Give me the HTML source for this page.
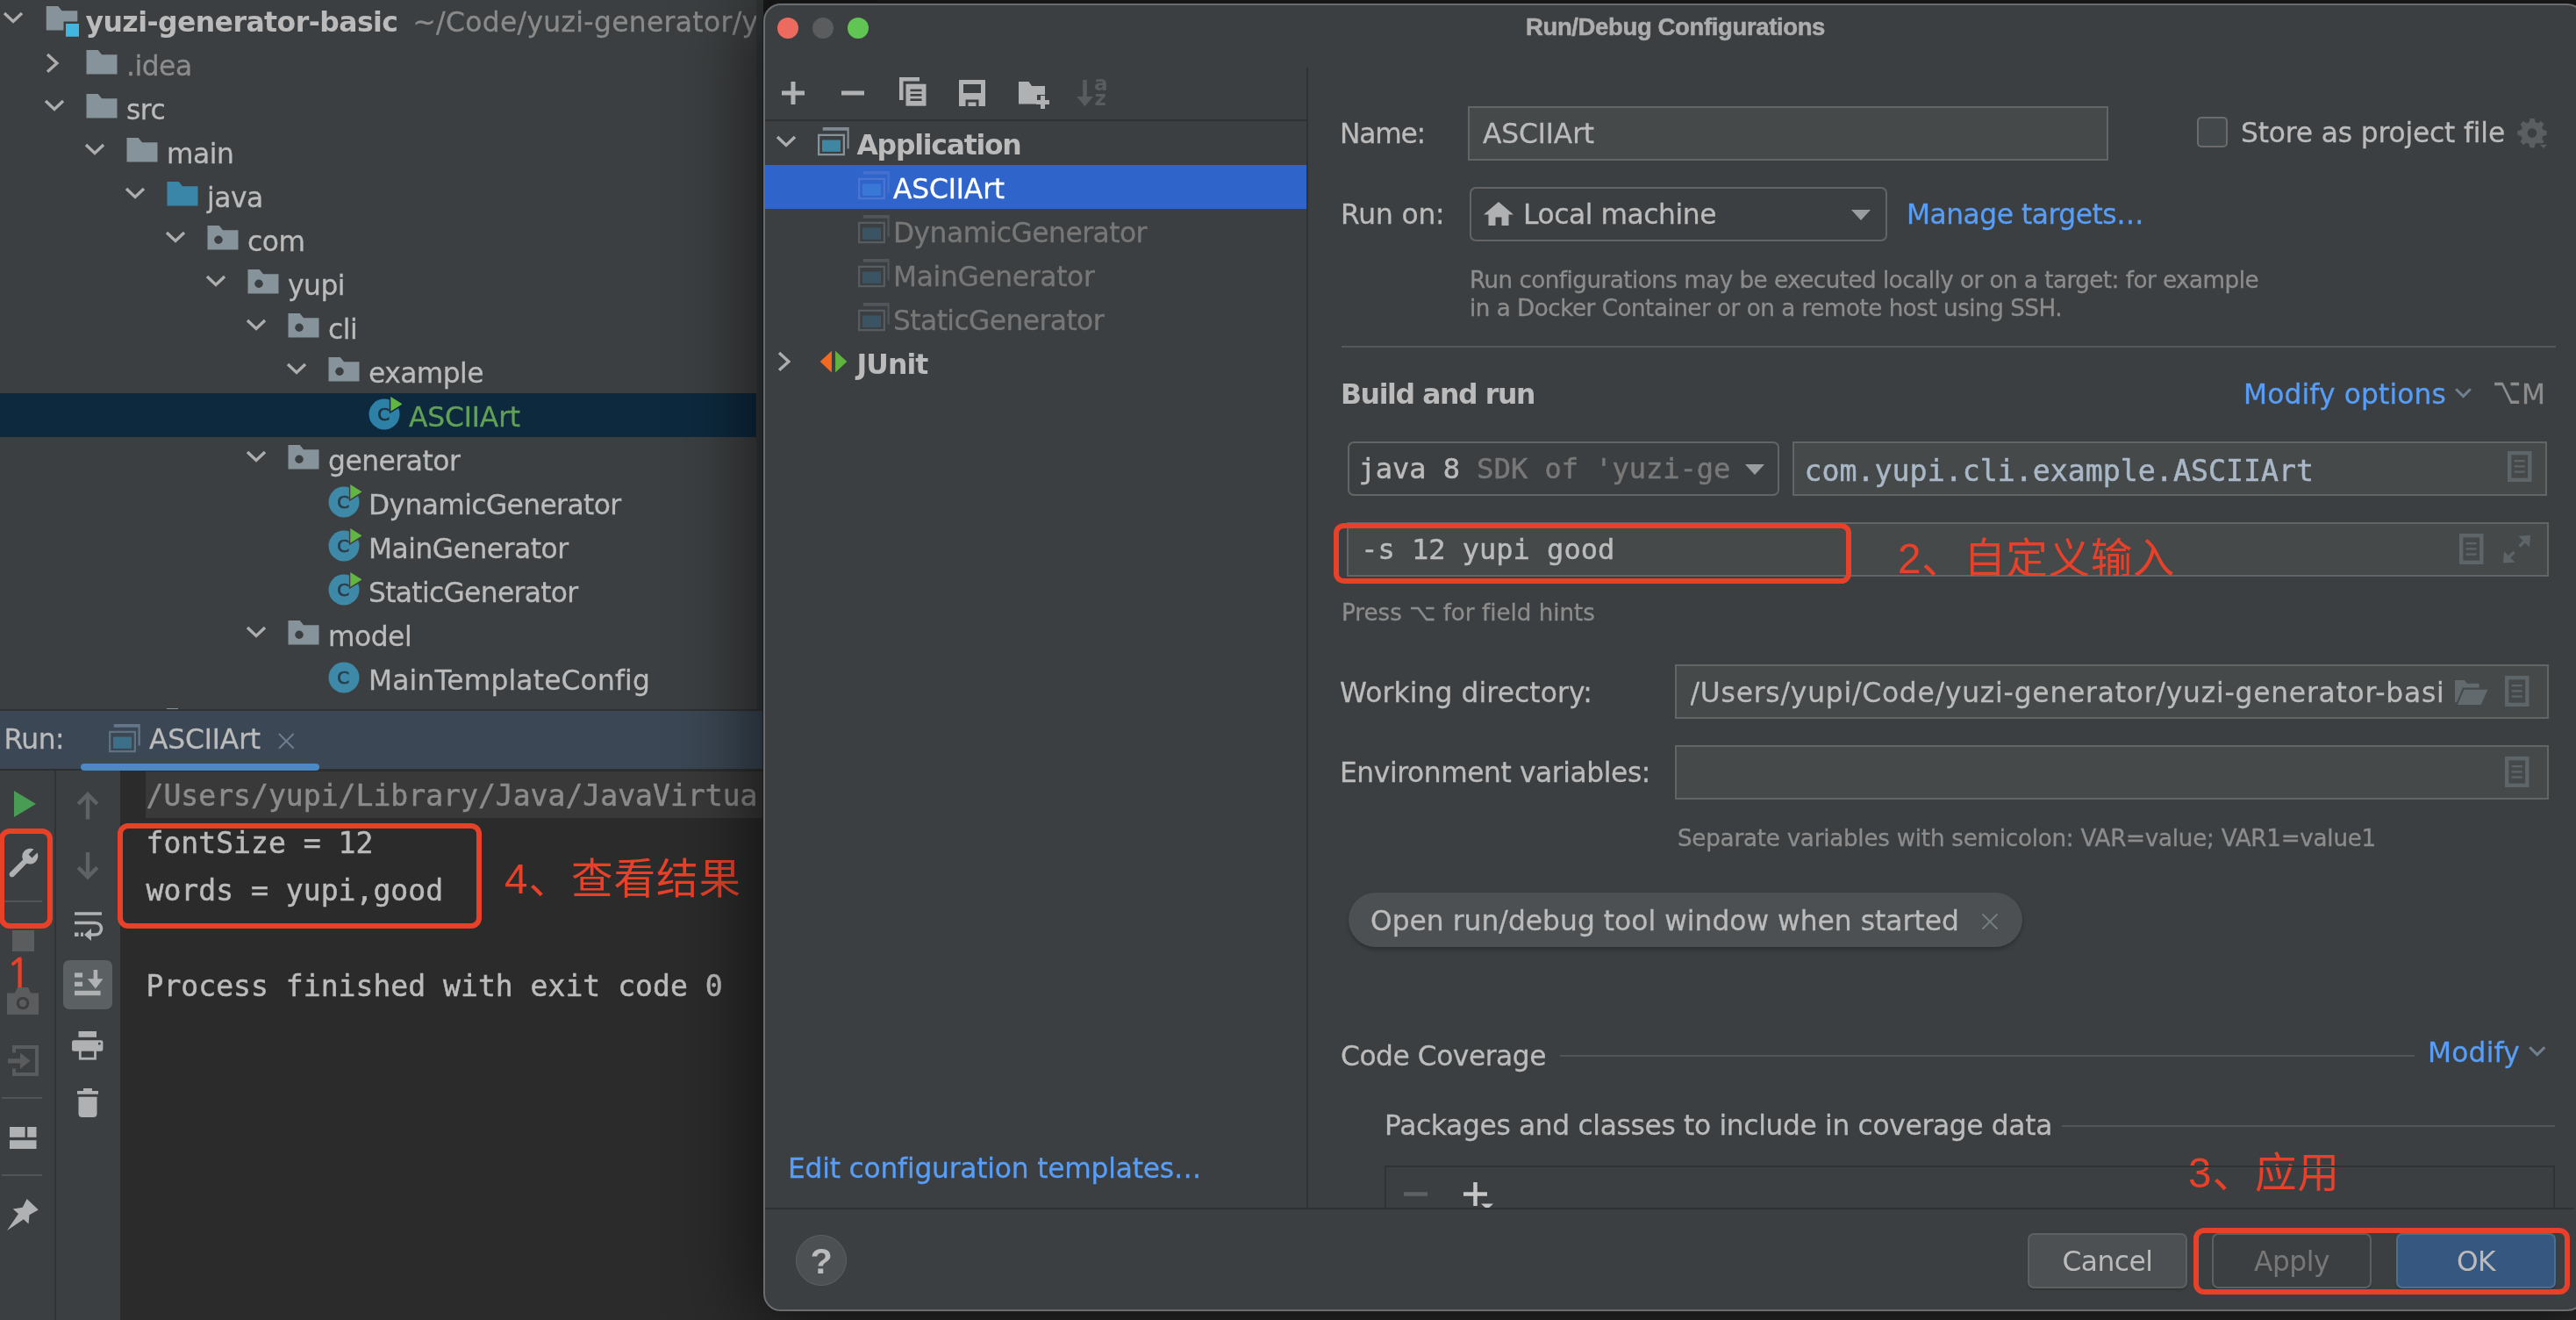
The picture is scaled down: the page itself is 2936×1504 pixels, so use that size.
<!DOCTYPE html>
<html lang="zh"><head><meta charset="utf-8"><title>Run/Debug Configurations</title><style>
html,body{margin:0;padding:0;background:#1b1b1b;}
body{width:2936px;height:1504px;position:relative;overflow:hidden;font-family:'DejaVu Sans', 'Liberation Sans', 'Noto Sans CJK SC', sans-serif;will-change:transform;}
.a{position:absolute;box-sizing:border-box;}
.t{position:absolute;white-space:pre;}
svg{overflow:visible;}
</style></head>
<body>
<svg width="0" height="0" style="position:absolute">
<defs>
<symbol id="folder" viewBox="0 0 16 16"><path fill="#87939a" d="M1,1.6 H6.3 L8,3.7 H15 V12.6 H1 Z"/></symbol>
<symbol id="folderSrc" viewBox="0 0 16 16"><path fill="#3a86a8" d="M1,1.6 H6.3 L8,3.7 H15 V12.6 H1 Z"/></symbol>
<symbol id="folderPkg" viewBox="0 0 16 16"><path fill="#87939a" d="M1,1.6 H6.3 L8,3.7 H15 V12.6 H1 Z"/><circle cx="6" cy="8.1" r="1.9" fill="#3c3f41"/></symbol>
<symbol id="folderMod" viewBox="0 0 16 16"><path fill="#87939a" d="M1.1,1.6 H6.5 L8.2,3.7 H15.3 V12.6 H1.1 Z"/><rect x="9" y="8.6" width="7.5" height="7.5" fill="#3c3f41"/><rect x="10" y="9.6" width="6" height="5.9" fill="#40b6e0"/></symbol>
<symbol id="cls" viewBox="0 0 16 16"><circle cx="8" cy="8" r="7" fill="#3e89a8"/><text x="7.7" y="10.85" font-size="8" font-family="DejaVu Sans, sans-serif" text-anchor="middle" fill="#2b3d49" stroke="#2b3d49" stroke-width="0.3">C</text></symbol>
<symbol id="clsRun" viewBox="0 0 16 16"><circle cx="8" cy="8" r="7" fill="#3e89a8"/><text x="7.7" y="10.85" font-size="8" font-family="DejaVu Sans, sans-serif" text-anchor="middle" fill="#2b3d49" stroke="#2b3d49" stroke-width="0.3">C</text><path d="M10.35,-1 L17.6,3.35 L10.35,7.7 Z" fill="#3c3f41"/><path d="M10.9,0 L16.2,3.35 L10.9,6.7 Z" fill="#62b543"/></symbol>
<symbol id="clsRunSel" viewBox="0 0 16 16"><circle cx="8" cy="8" r="7" fill="#2d80a6"/><text x="7.7" y="10.85" font-size="8" font-family="DejaVu Sans, sans-serif" text-anchor="middle" fill="#22323f" stroke="#22323f" stroke-width="0.3">C</text><path d="M10.35,-1 L17.6,3.35 L10.35,7.7 Z" fill="#0d293e"/><path d="M10.9,0 L16.2,3.35 L10.9,6.7 Z" fill="#62b543"/></symbol>
<symbol id="chevD" viewBox="0 0 16 16"><path d="M4,4.83 L8,8.6 L12,4.83" fill="none" stroke="#adadad" stroke-width="1.35"/></symbol>
<symbol id="chevR" viewBox="0 0 16 16"><path d="M5.62,3.64 L9.95,7.56 L5.62,11.48" fill="none" stroke="#adadad" stroke-width="1.35"/></symbol>
<symbol id="appcfg" viewBox="0 0 16 16"><path d="M3.1,1.6 H15.1 V11.4 H14.2 V3.1 H3.1 Z" fill="#7f8b93"/><rect x="1.25" y="5.15" width="11.5" height="8.9" fill="none" stroke="#87939a" stroke-width="0.9"/><rect x="2.8" y="7.4" width="8.4" height="5.35" fill="#3e87a3"/></symbol>
<symbol id="appcfgSel" viewBox="0 0 16 16"><path d="M3.1,1.6 H15.1 V11.4 H14.2 V3.1 H3.1 Z" fill="#4670cd"/><rect x="1.25" y="5.15" width="11.5" height="8.9" fill="none" stroke="#4a74d0" stroke-width="0.9"/><rect x="2.8" y="7.4" width="8.4" height="5.35" fill="#3a78d6"/></symbol>
<symbol id="appcfgDim" viewBox="0 0 16 16"><path d="M3.1,1.6 H15.1 V11.4 H14.2 V3.1 H3.1 Z" fill="#50565a"/><rect x="1.25" y="5.15" width="11.5" height="8.9" fill="none" stroke="#565d61" stroke-width="0.9"/><rect x="2.8" y="7.4" width="8.4" height="5.35" fill="#3b5463"/></symbol>
<symbol id="appcfgTab" viewBox="0 0 16 16"><path d="M3.1,1.6 H15.1 V11.4 H14.2 V3.1 H3.1 Z" fill="#65768a"/><rect x="1.25" y="5.15" width="11.5" height="8.9" fill="none" stroke="#5f7081" stroke-width="0.9"/><rect x="2.8" y="7.4" width="8.4" height="5.35" fill="#3c6f88"/></symbol>
<symbol id="junit" viewBox="0 0 16 16"><path d="M7.18,3.05 V12.95 L1.88,8 Z" fill="#f26a21"/><path d="M8.82,3.05 V12.95 L14.12,8 Z" fill="#60b33f"/></symbol>
</defs>
</svg>

<div class="a" style="left:0px;top:0px;width:862px;height:810px;background:#3c3f41;"></div>
<div class="a" style="left:0px;top:448px;width:862px;height:50px;background:#0d293e;"></div>
<svg class="a" style="left:49.5px;top:3px;" width="40" height="40" viewBox="0 0 16 16"><use href="#folderMod"/></svg>
<svg class="a" style="left:-5px;top:3px;" width="40" height="40" viewBox="0 0 16 16"><use href="#chevD"/></svg>
<div class="t" id="t0" style="left:97.5px;top:2.60px;height:44px;line-height:44px;font-size:31.5px;color:#bbbbbb;font-weight:bold;letter-spacing:-0.550px;">yuzi-generator-basic</div>
<div class="t" id="t1" style="left:470.5px;top:2.60px;height:44px;line-height:44px;font-size:31.3px;color:#8a8a8a;-webkit-text-stroke:0.3px;letter-spacing:0.355px;width:391.5px;overflow:hidden;">~/Code/yuzi-generator/yuzi</div>
<svg class="a" style="left:96px;top:53px;" width="40" height="40" viewBox="0 0 16 16"><use href="#folder"/></svg>
<svg class="a" style="left:40px;top:53px;" width="40" height="40" viewBox="0 0 16 16"><use href="#chevR"/></svg>
<div class="t" id="t2" style="left:144px;top:52.60px;height:44px;line-height:44px;font-size:31.3px;color:#8c8c8c;-webkit-text-stroke:0.3px;letter-spacing:-0.469px;">.idea</div>
<svg class="a" style="left:96px;top:103px;" width="40" height="40" viewBox="0 0 16 16"><use href="#folder"/></svg>
<svg class="a" style="left:42px;top:103px;" width="40" height="40" viewBox="0 0 16 16"><use href="#chevD"/></svg>
<div class="t" id="t3" style="left:144px;top:102.60px;height:44px;line-height:44px;font-size:31.3px;color:#bbbbbb;-webkit-text-stroke:0.3px;letter-spacing:-0.469px;">src</div>
<svg class="a" style="left:142px;top:153px;" width="40" height="40" viewBox="0 0 16 16"><use href="#folder"/></svg>
<svg class="a" style="left:88px;top:153px;" width="40" height="40" viewBox="0 0 16 16"><use href="#chevD"/></svg>
<div class="t" id="t4" style="left:190px;top:152.60px;height:44px;line-height:44px;font-size:31.3px;color:#bbbbbb;-webkit-text-stroke:0.3px;letter-spacing:-0.469px;">main</div>
<svg class="a" style="left:188px;top:203px;" width="40" height="40" viewBox="0 0 16 16"><use href="#folderSrc"/></svg>
<svg class="a" style="left:134px;top:203px;" width="40" height="40" viewBox="0 0 16 16"><use href="#chevD"/></svg>
<div class="t" id="t5" style="left:236px;top:202.60px;height:44px;line-height:44px;font-size:31.3px;color:#bbbbbb;-webkit-text-stroke:0.3px;letter-spacing:-0.469px;">java</div>
<svg class="a" style="left:234px;top:253px;" width="40" height="40" viewBox="0 0 16 16"><use href="#folderPkg"/></svg>
<svg class="a" style="left:180px;top:253px;" width="40" height="40" viewBox="0 0 16 16"><use href="#chevD"/></svg>
<div class="t" id="t6" style="left:282px;top:252.60px;height:44px;line-height:44px;font-size:31.3px;color:#bbbbbb;-webkit-text-stroke:0.3px;letter-spacing:-0.469px;">com</div>
<svg class="a" style="left:280px;top:303px;" width="40" height="40" viewBox="0 0 16 16"><use href="#folderPkg"/></svg>
<svg class="a" style="left:226px;top:303px;" width="40" height="40" viewBox="0 0 16 16"><use href="#chevD"/></svg>
<div class="t" id="t7" style="left:328px;top:302.60px;height:44px;line-height:44px;font-size:31.3px;color:#bbbbbb;-webkit-text-stroke:0.3px;letter-spacing:-0.469px;">yupi</div>
<svg class="a" style="left:326px;top:353px;" width="40" height="40" viewBox="0 0 16 16"><use href="#folderPkg"/></svg>
<svg class="a" style="left:272px;top:353px;" width="40" height="40" viewBox="0 0 16 16"><use href="#chevD"/></svg>
<div class="t" id="t8" style="left:374px;top:352.60px;height:44px;line-height:44px;font-size:31.3px;color:#bbbbbb;-webkit-text-stroke:0.3px;letter-spacing:-0.469px;">cli</div>
<svg class="a" style="left:372px;top:403px;" width="40" height="40" viewBox="0 0 16 16"><use href="#folderPkg"/></svg>
<svg class="a" style="left:318px;top:403px;" width="40" height="40" viewBox="0 0 16 16"><use href="#chevD"/></svg>
<div class="t" id="t9" style="left:420px;top:402.60px;height:44px;line-height:44px;font-size:31.3px;color:#bbbbbb;-webkit-text-stroke:0.3px;letter-spacing:-0.531px;">example</div>
<svg class="a" style="left:418px;top:452px;" width="40" height="40" viewBox="0 0 16 16"><use href="#clsRunSel"/></svg>
<div class="t" id="t10" style="left:466px;top:452.60px;height:44px;line-height:44px;font-size:31.3px;color:#62a055;-webkit-text-stroke:0.3px;letter-spacing:-0.143px;">ASCIIArt</div>
<svg class="a" style="left:326px;top:503px;" width="40" height="40" viewBox="0 0 16 16"><use href="#folderPkg"/></svg>
<svg class="a" style="left:272px;top:503px;" width="40" height="40" viewBox="0 0 16 16"><use href="#chevD"/></svg>
<div class="t" id="t11" style="left:374px;top:502.60px;height:44px;line-height:44px;font-size:31.3px;color:#bbbbbb;-webkit-text-stroke:0.3px;letter-spacing:-0.469px;">generator</div>
<svg class="a" style="left:372px;top:552px;" width="40" height="40" viewBox="0 0 16 16"><use href="#clsRun"/></svg>
<div class="t" id="t12" style="left:420px;top:552.60px;height:44px;line-height:44px;font-size:31.3px;color:#bbbbbb;-webkit-text-stroke:0.3px;letter-spacing:-0.592px;">DynamicGenerator</div>
<svg class="a" style="left:372px;top:602px;" width="40" height="40" viewBox="0 0 16 16"><use href="#clsRun"/></svg>
<div class="t" id="t13" style="left:420px;top:602.60px;height:44px;line-height:44px;font-size:31.3px;color:#bbbbbb;-webkit-text-stroke:0.3px;letter-spacing:-0.469px;">MainGenerator</div>
<svg class="a" style="left:372px;top:652px;" width="40" height="40" viewBox="0 0 16 16"><use href="#clsRun"/></svg>
<div class="t" id="t14" style="left:420px;top:652.60px;height:44px;line-height:44px;font-size:31.3px;color:#bbbbbb;-webkit-text-stroke:0.3px;letter-spacing:-0.661px;">StaticGenerator</div>
<svg class="a" style="left:326px;top:703px;" width="40" height="40" viewBox="0 0 16 16"><use href="#folderPkg"/></svg>
<svg class="a" style="left:272px;top:703px;" width="40" height="40" viewBox="0 0 16 16"><use href="#chevD"/></svg>
<div class="t" id="t15" style="left:374px;top:702.60px;height:44px;line-height:44px;font-size:31.3px;color:#bbbbbb;-webkit-text-stroke:0.3px;letter-spacing:-0.469px;">model</div>
<svg class="a" style="left:372px;top:752px;" width="40" height="40" viewBox="0 0 16 16"><use href="#cls"/></svg>
<div class="t" id="t16" style="left:420px;top:752.60px;height:44px;line-height:44px;font-size:31.3px;color:#bbbbbb;-webkit-text-stroke:0.3px;letter-spacing:0.170px;">MainTemplateConfig</div>
<div class="a" style="left:190px;top:806.6px;width:13px;height:1.6px;background:#87939a;"></div>
<div class="a" style="left:0px;top:808px;width:870px;height:2px;background:#323232;"></div>
<div class="a" style="left:0px;top:810px;width:870px;height:66px;background:#3b4754;"></div>
<div class="t" id="t17" style="left:4.5px;top:820.20px;height:44px;line-height:44px;font-size:31.3px;color:#bbbbbb;-webkit-text-stroke:0.3px;letter-spacing:-0.469px;">Run:</div>
<svg class="a" style="left:122px;top:820.8px;" width="40" height="40" viewBox="0 0 16 16"><use href="#appcfgTab"/></svg>
<div class="t" id="t18" style="left:170px;top:820.00px;height:44px;line-height:44px;font-size:31.3px;color:#bbbbbb;-webkit-text-stroke:0.3px;letter-spacing:-0.143px;">ASCIIArt</div>
<svg class="a" style="left:316.6px;top:834.8px;" width="18.6" height="18.6" viewBox="0 0 20 20" preserveAspectRatio="none"><path d="M1,1 L19,19 M19,1 L1,19" stroke="#6d7d8d" stroke-width="2.2" fill="none"/></svg>
<div class="a" style="left:0px;top:875.6px;width:870px;height:2.6px;background:#2d2f30;"></div>
<div class="a" style="left:92px;top:870px;width:272px;height:7.8px;background:#4a88c7;border-radius:4px;"></div>
<div class="a" style="left:0px;top:878px;width:62px;height:626px;background:#3c3f41;"></div>
<div class="a" style="left:62px;top:878px;width:2px;height:626px;background:#323232;"></div>
<div class="a" style="left:64px;top:878px;width:73px;height:626px;background:#3c3f41;"></div>
<div class="a" style="left:137px;top:878px;width:2799px;height:626px;background:#2b2b2b;"></div>
<div class="a" style="left:166px;top:878.5px;width:704px;height:53.5px;background:#393939;"></div>
<div class="t" id="t19" style="left:166.5px;top:884.00px;height:46px;line-height:46px;font-size:33.1px;color:#8b8b8b;font-family:'DejaVu Sans Mono', 'Liberation Mono', monospace;-webkit-text-stroke:0.5px;width:703px;overflow:hidden;">/Users/yupi/Library/Java/JavaVirtua'</div>
<div class="t" id="t20" style="left:166.5px;top:938.00px;height:46px;line-height:46px;font-size:33.1px;color:#bbbbbb;font-family:'DejaVu Sans Mono', 'Liberation Mono', monospace;-webkit-text-stroke:0.5px;">fontSize = 12</div>
<div class="t" id="t21" style="left:166.5px;top:992.00px;height:46px;line-height:46px;font-size:33.1px;color:#bbbbbb;font-family:'DejaVu Sans Mono', 'Liberation Mono', monospace;-webkit-text-stroke:0.5px;">words = yupi,good</div>
<div class="t" id="t22" style="left:166.5px;top:1101.00px;height:46px;line-height:46px;font-size:33.1px;color:#bbbbbb;font-family:'DejaVu Sans Mono', 'Liberation Mono', monospace;-webkit-text-stroke:0.5px;">Process finished with exit code 0</div>
<div class="a" style="left:134.1px;top:938.2px;width:414.6px;height:120px;border:6.2px solid #e8412a;border-radius:12px;"></div>
<div class="a" style="left:-0.8px;top:943.9px;width:60.3px;height:114.3px;border:6.2px solid #e8412a;border-radius:12px;"></div>
<div class="t" id="t23" style="left:575px;top:967.50px;height:67px;line-height:67px;font-size:47.6px;color:#e8412a;font-family:'Liberation Sans', 'Noto Sans CJK SC', sans-serif;letter-spacing:0.924px;">4、查看结果</div>
<div class="t" id="t24" style="left:6.5px;top:1077.00px;height:67px;line-height:67px;font-size:48px;color:#e8412a;font-family:NanumGothic, 'Liberation Sans', sans-serif;-webkit-text-stroke:0.8px #e8412a;">1</div>
<svg class="a" style="left:14px;top:900px;" width="30" height="32" viewBox="0 0 30 32" preserveAspectRatio="none"><path d="M2,1 L27,16 L2,31 Z" fill="#499c54"/></svg>
<svg class="a" style="left:8px;top:962px;" width="40" height="40" viewBox="0 0 40 40" preserveAspectRatio="none"><path d="M34.5,9.5 L28.5,15.5 L24.5,11.5 L30.5,5.5 C26.5,3.8 21.8,4.8 19.2,8.2 C17,11 16.8,14.6 18.2,17.6 L3.5,32 C2.3,33.2 2.3,35.2 3.5,36.4 C4.7,37.6 6.7,37.6 7.9,36.4 L22.4,21.8 C25.6,23.2 29.4,22.8 32.2,20.2 C35.2,17.4 36.2,13.2 34.5,9.5 Z" fill="#afb1b3"/></svg>
<div class="a" style="left:5px;top:1026px;width:43px;height:2px;background:#515456;"></div>
<div class="a" style="left:13.6px;top:1059.8px;width:25px;height:24.5px;background:#5a5c5d;"></div>
<svg class="a" style="left:8px;top:1124.5px;" width="36" height="31" viewBox="0 0 36 31" preserveAspectRatio="none"><path d="M0,6.5 H9 L12,0 H24 L27,6.5 H36 V31 H0 Z" fill="#5a5c5d"/><circle cx="18" cy="18" r="7.3" fill="#3c3f41"/><circle cx="18" cy="18" r="4.2" fill="#5a5c5d"/></svg>
<svg class="a" style="left:8.6px;top:1190.5px;" width="35" height="35" viewBox="0 0 35 35" preserveAspectRatio="none"><path d="M5,8.4 V0 H35 V35 H5 V26.6 H9 V31 H31 V4 H9 V8.4 Z" fill="#595b5c"/><path d="M0,15.2 H14 V8.4 L25.5,17.7 L14,27 V20.5 H0 Z" fill="#595b5c"/></svg>
<div class="a" style="left:2px;top:1250px;width:46px;height:2px;background:#515456;"></div>
<svg class="a" style="left:10.9px;top:1283.6px;" width="30.5" height="25" viewBox="0 0 30.5 25" preserveAspectRatio="none"><rect x="0" y="0" width="17.5" height="11.8" fill="#afb1b3"/><rect x="20.2" y="0" width="10.3" height="11.8" fill="#afb1b3"/><rect x="0" y="15.2" width="30.5" height="9.8" fill="#afb1b3"/></svg>
<div class="a" style="left:2px;top:1338px;width:46px;height:2px;background:#515456;"></div>
<svg class="a" style="left:8px;top:1366px;" width="36" height="36" viewBox="0 0 36 36" preserveAspectRatio="none"><path d="M22.7,0 L35.7,12.5 L25.5,18.2 L24.5,28.4 L18.9,23.2 L0,35.9 L13,17 L6.8,11.4 L17.7,9.8 Z" fill="#afb1b3"/></svg>
<svg class="a" style="left:86px;top:902px;" width="28" height="31.5" viewBox="0 0 28 31.5" preserveAspectRatio="none"><path d="M14,3 V31.5 M3.2,14 L14,3.2 L24.8,14" fill="none" stroke="#5f6264" stroke-width="4.4"/></svg>
<svg class="a" style="left:86px;top:971px;" width="28" height="31.5" viewBox="0 0 28 31.5" preserveAspectRatio="none"><path d="M14,0 V28.5 M3.2,17.5 L14,28.3 L24.8,17.5" fill="none" stroke="#5f6264" stroke-width="4.4"/></svg>
<svg class="a" style="left:84px;top:1038px;" width="34" height="34" viewBox="0 0 34 34" preserveAspectRatio="none"><path d="M1,3 H32 M1,13.5 H24 C34,13.5 34,27 24,27 H18" fill="none" stroke="#afb1b3" stroke-width="3.6"/><path d="M20,20 L12,27 L20,34 Z" fill="#afb1b3"/><rect x="1" y="24.5" width="4.5" height="4.5" fill="#afb1b3"/><rect x="8" y="24.5" width="3" height="4.5" fill="#afb1b3"/></svg>
<div class="a" style="left:72.3px;top:1094px;width:55.7px;height:56px;background:#5b6063;border-radius:7px;"></div>
<svg class="a" style="left:85.2px;top:1105.2px;" width="32.6" height="29.6" viewBox="0 0 32.6 29.6" preserveAspectRatio="none"><rect x="0" y="3.4" width="9.1" height="5.2" fill="#afb1b3"/><rect x="0" y="13.7" width="9.1" height="5.2" fill="#afb1b3"/><rect x="0" y="23.8" width="29.6" height="5.4" fill="#afb1b3"/><rect x="21.6" y="0" width="4.6" height="13" fill="#afb1b3"/><path d="M14.8,10.3 H32.5 L23.9,21.6 Z" fill="#afb1b3"/></svg>
<svg class="a" style="left:82.3px;top:1175px;" width="35.4" height="33" viewBox="0 0 35.4 33" preserveAspectRatio="none"><rect x="7.5" y="0" width="20.5" height="6.8" fill="#afb1b3"/><rect x="0" y="10.2" width="35.4" height="12.6" rx="2.2" fill="#afb1b3"/><rect x="9.3" y="21.3" width="17.2" height="9.9" fill="#3c3f41" stroke="#afb1b3" stroke-width="2.8"/><rect x="30" y="12.8" width="2.6" height="2.6" fill="#3c3f41"/></svg>
<svg class="a" style="left:88px;top:1240px;" width="24" height="33" viewBox="0 0 24 34" preserveAspectRatio="none"><path d="M7,0 H17 V3 H24 V7 H0 V3 H7 Z" fill="#afb1b3"/><path d="M1.5,10 H22.5 V30 C22.5,32.5 21,34 18.5,34 H5.5 C3,34 1.5,32.5 1.5,30 Z" fill="#afb1b3"/></svg>
<div class="a" style="left:862px;top:0px;width:8px;height:808px;background:#35383a;"></div>
<div class="a" style="left:0px;top:0px;width:0px;height:0px;"></div>
<div class="a" style="left:869.5px;top:4px;width:2076px;height:1490px;background:#3c3f41;border:2px solid #6a6c6e;border-radius:20px;box-shadow:0 0 0 1px #1c1c1c, 0 8px 90px 10px rgba(0,0,0,.62);"></div>
<div class="a" style="left:1000px;top:0px;width:1936px;height:4px;background:#161616;"></div>
<div class="a" style="left:885.75px;top:19.75px;width:24.5px;height:24.5px;background:#ec6a5e;border-radius:50%;"></div>
<div class="a" style="left:925.75px;top:19.75px;width:24.5px;height:24.5px;background:#5a5c5e;border-radius:50%;"></div>
<div class="a" style="left:965.75px;top:19.75px;width:24.5px;height:24.5px;background:#61c554;border-radius:50%;"></div>
<div class="t" id="t25" style="left:1739px;top:11.50px;height:38px;line-height:38px;font-size:27.5px;color:#adadad;font-family:'Liberation Sans', 'DejaVu Sans', sans-serif;font-weight:bold;letter-spacing:-0.368px;-webkit-text-stroke:0.5px;">Run/Debug Configurations</div>
<svg class="a" style="left:891px;top:93px;" width="26" height="26" viewBox="0 0 26 26" preserveAspectRatio="none"><path d="M13,0 V26 M0,13 H26" stroke="#afb1b3" stroke-width="5" fill="none"/></svg>
<svg class="a" style="left:959px;top:93px;" width="26" height="26" viewBox="0 0 26 26" preserveAspectRatio="none"><path d="M0,13 H26" stroke="#afb1b3" stroke-width="5" fill="none"/></svg>
<svg class="a" style="left:1025px;top:88px;" width="31" height="33" viewBox="0 0 31 33" preserveAspectRatio="none"><path d="M0,0 H23 V4.5 H4.5 V26 H0 Z" fill="#afb1b3"/><rect x="7.5" y="7.7" width="23" height="25" fill="#afb1b3"/><rect x="12.5" y="13.6" width="13" height="2.6" fill="#3c3f41"/><rect x="12.5" y="19" width="13" height="2.6" fill="#3c3f41"/><rect x="12.5" y="24.4" width="13" height="2.6" fill="#3c3f41"/></svg>
<svg class="a" style="left:1093px;top:91px;" width="30" height="30" viewBox="0 0 30 30" preserveAspectRatio="none"><path d="M0,0 H30 V30 H22.5 V22.5 H7.5 V30 H0 Z M5,5 V15 H25 V5 Z" fill="#afb1b3" fill-rule="evenodd"/><rect x="10.5" y="25.5" width="9" height="4.5" fill="#afb1b3"/></svg>
<svg class="a" style="left:1161px;top:93px;" width="35" height="31" viewBox="0 0 35 31" preserveAspectRatio="none"><path d="M0,0 H11.5 L15,5 H30 V15 H21 V25.5 H0 Z" fill="#afb1b3"/><path d="M27.5,16 V31 M20,23.5 H35" stroke="#afb1b3" stroke-width="5" fill="none"/></svg>
<svg class="a" style="left:1226.9px;top:91.2px;" width="19" height="30" viewBox="0 0 19 30" preserveAspectRatio="none"><path d="M7.2,0 H11.8 V19 H19 L9.5,30 L0,19 H7.2 Z" fill="#595c5e"/></svg>
<div class="t" id="t26" style="left:1247px;top:83.00px;height:24px;line-height:24px;font-size:23px;color:#595c5e;font-weight:bold;letter-spacing:-0.345px;">a</div>
<div class="t" id="t27" style="left:1247.5px;top:100.30px;height:24px;line-height:24px;font-size:23px;color:#595c5e;font-weight:bold;letter-spacing:-0.345px;">z</div>
<div class="a" style="left:871.5px;top:135.5px;width:617px;height:2px;background:#2f3133;"></div>
<div class="a" style="left:1488.5px;top:77px;width:2px;height:1300px;background:#2f3133;"></div>
<div class="a" style="left:871.5px;top:188px;width:617px;height:50px;background:#2f65ca;"></div>
<svg class="a" style="left:875.9px;top:143.5px;" width="40" height="40" viewBox="0 0 16 16"><use href="#chevD"/></svg>
<svg class="a" style="left:930px;top:140.5px;" width="40" height="40" viewBox="0 0 16 16"><use href="#appcfg"/></svg>
<div class="t" id="t28" style="left:976.5px;top:142.50px;height:44px;line-height:44px;font-size:31.5px;color:#bbbbbb;font-weight:bold;letter-spacing:-1.266px;">Application</div>
<svg class="a" style="left:976px;top:190.5px;" width="40" height="40" viewBox="0 0 16 16"><use href="#appcfgSel"/></svg>
<div class="t" id="t29" style="left:1018px;top:192.50px;height:44px;line-height:44px;font-size:31.3px;color:#ffffff;-webkit-text-stroke:0.3px;letter-spacing:-0.143px;">ASCIIArt</div>
<svg class="a" style="left:976px;top:240.5px;" width="40" height="40" viewBox="0 0 16 16"><use href="#appcfgDim"/></svg>
<div class="t" id="t30" style="left:1018px;top:242.50px;height:44px;line-height:44px;font-size:31.3px;color:#777777;-webkit-text-stroke:0.3px;letter-spacing:-0.498px;">DynamicGenerator</div>
<svg class="a" style="left:976px;top:290.5px;" width="40" height="40" viewBox="0 0 16 16"><use href="#appcfgDim"/></svg>
<div class="t" id="t31" style="left:1018px;top:292.50px;height:44px;line-height:44px;font-size:31.3px;color:#777777;-webkit-text-stroke:0.3px;letter-spacing:-0.320px;">MainGenerator</div>
<svg class="a" style="left:976px;top:340.5px;" width="40" height="40" viewBox="0 0 16 16"><use href="#appcfgDim"/></svg>
<div class="t" id="t32" style="left:1018px;top:342.50px;height:44px;line-height:44px;font-size:31.3px;color:#777777;-webkit-text-stroke:0.3px;letter-spacing:-0.561px;">StaticGenerator</div>
<svg class="a" style="left:874.2px;top:393px;" width="40" height="40" viewBox="0 0 16 16"><use href="#chevR"/></svg>
<svg class="a" style="left:930.3px;top:392px;" width="40" height="40" viewBox="0 0 16 16"><use href="#junit"/></svg>
<div class="t" id="t33" style="left:976.5px;top:392.50px;height:44px;line-height:44px;font-size:31.5px;color:#bbbbbb;font-weight:bold;letter-spacing:-0.919px;">JUnit</div>
<div class="t" id="t34" style="left:898px;top:1309.00px;height:44px;line-height:44px;font-size:31.3px;color:#589df6;-webkit-text-stroke:0.3px;letter-spacing:-0.207px;">Edit configuration templates…</div>
<div class="a" style="left:871.5px;top:1376px;width:2062px;height:2px;background:#2f3133;"></div>
<div class="a" style="left:906.9px;top:1406.8px;width:58px;height:58px;background:#4c5052;border:1.5px solid #5e6162;border-radius:50%;"></div>
<div class="t" id="t35" style="left:923.5px;top:1408.00px;height:58px;line-height:58px;font-size:41.5px;color:#bbbbbb;font-family:'Liberation Sans', 'DejaVu Sans', sans-serif;font-weight:bold;">?</div>
<div class="a" style="left:2311px;top:1405px;width:182px;height:62.5px;background:#4c5052;border:2px solid #5e6060;border-radius:7px;box-shadow:0 2px 2px rgba(0,0,0,.18);"></div>
<div class="t" style="left:2311px;top:1405px;width:182px;height:62.5px;line-height:65.5px;text-align:center;font-size:31.3px;letter-spacing:-0.47px;color:#bbbbbb;">Cancel</div>
<div class="a" style="left:2521px;top:1405px;width:182px;height:62.5px;background:#3c3f41;border:2px solid #5e6060;border-radius:7px;box-shadow:0 2px 2px rgba(0,0,0,.18);"></div>
<div class="t" style="left:2521px;top:1405px;width:182px;height:62.5px;line-height:65.5px;text-align:center;font-size:31.3px;letter-spacing:-0.47px;color:#777777;">Apply</div>
<div class="a" style="left:2731px;top:1405px;width:182px;height:62.5px;background:#365880;border:2px solid #4c708c;border-radius:7px;box-shadow:0 2px 2px rgba(0,0,0,.18);"></div>
<div class="t" style="left:2731px;top:1405px;width:182px;height:62.5px;line-height:65.5px;text-align:center;font-size:31.3px;letter-spacing:-0.47px;color:#bbbbbb;">OK</div>
<div class="a" style="left:2499.5px;top:1399px;width:429.4px;height:76.4px;border:6.2px solid #e8412a;border-radius:12px;"></div>
<div class="t" id="t36" style="left:2494px;top:1302.50px;height:67px;line-height:67px;font-size:47.6px;color:#e8412a;font-family:'Liberation Sans', 'Noto Sans CJK SC', sans-serif;letter-spacing:0.934px;">3、应用</div>
<div class="t" id="t37" style="left:1527px;top:130.20px;height:44px;line-height:44px;font-size:31.3px;color:#bbbbbb;-webkit-text-stroke:0.3px;letter-spacing:-1.178px;">Name:</div>
<div class="a" style="left:1673px;top:121px;width:730px;height:62px;background:#45494a;border:2px solid #646464;"></div>
<div class="t" id="t38" style="left:1690px;top:130.20px;height:44px;line-height:44px;font-size:31.3px;color:#bbbbbb;-webkit-text-stroke:0.3px;letter-spacing:-0.143px;">ASCIIArt</div>
<div class="a" style="left:2503.5px;top:133px;width:35px;height:35px;background:#43494a;border:2px solid #6b6b6b;border-radius:5px;"></div>
<div class="t" id="t39" style="left:2554px;top:129.20px;height:44px;line-height:44px;font-size:31.3px;color:#bbbbbb;-webkit-text-stroke:0.3px;letter-spacing:-0.159px;">Store as project file</div>
<svg class="a" style="left:2869px;top:134px;" width="36" height="36" viewBox="0 0 36 36" preserveAspectRatio="none"><path d="M14.5,1 H19.5 L20.5,5.2 L23.3,6.4 L27,4.1 L30.5,7.6 L28.2,11.3 L29.4,14.1 L33.6,15.1 V20.1 L29.4,21.1 L28.2,23.9 L30.5,27.6 L27,31.1 L23.3,28.8 L20.5,30 L19.5,34.2 H14.5 L13.5,30 L10.7,28.8 L7,31.1 L3.5,27.6 L5.8,23.9 L4.6,21.1 L0.4,20.1 V15.1 L4.6,14.1 L5.8,11.3 L3.5,7.6 L7,4.1 L10.7,6.4 L13.5,5.2 Z M17,12.3 A5.3,5.3 0 1 0 17.01,12.3 Z" fill="#5b5e60" fill-rule="evenodd"/><path d="M24,30 H36 L30,36 Z" fill="#5b5e60" stroke="#3c3f41" stroke-width="1.5"/></svg>
<div class="t" id="t40" style="left:1528px;top:221.70px;height:44px;line-height:44px;font-size:31.3px;color:#bbbbbb;-webkit-text-stroke:0.3px;letter-spacing:-0.143px;">Run on:</div>
<div class="a" style="left:1675px;top:213px;width:476px;height:62px;background:#3c3f41;border:2px solid #646464;border-radius:7px;"></div>
<svg class="a" style="left:1691px;top:229.5px;" width="34" height="27" viewBox="0 0 34 27" preserveAspectRatio="none"><path d="M17,0 L34,14.5 H28.5 V27 H20.5 V17.5 H13.5 V27 H5.5 V14.5 H0 Z" fill="#afb1b3"/></svg>
<div class="t" id="t41" style="left:1736px;top:221.70px;height:44px;line-height:44px;font-size:31.3px;color:#bbbbbb;-webkit-text-stroke:0.3px;letter-spacing:-0.428px;">Local machine</div>
<svg class="a" style="left:2110px;top:239px;" width="22" height="12" viewBox="0 0 22 12" preserveAspectRatio="none"><path d="M0,0 H22 L11,12 Z" fill="#9a9da0"/></svg>
<div class="t" id="t42" style="left:2173px;top:221.70px;height:44px;line-height:44px;font-size:31.3px;color:#589df6;-webkit-text-stroke:0.3px;letter-spacing:-0.469px;">Manage targets…</div>
<div class="t" id="t43" style="left:1675px;top:301.00px;height:37px;line-height:37px;font-size:26.2px;color:#8c8c8c;-webkit-text-stroke:0.3px;letter-spacing:-0.526px;">Run configurations may be executed locally or on a target: for example</div>
<div class="t" id="t44" style="left:1675px;top:333.20px;height:37px;line-height:37px;font-size:26.2px;color:#8c8c8c;-webkit-text-stroke:0.3px;letter-spacing:-0.492px;">in a Docker Container or on a remote host using SSH.</div>
<div class="a" style="left:1528.5px;top:394px;width:1384px;height:2px;background:#55585a;"></div>
<div class="t" id="t45" style="left:1528px;top:426.70px;height:44px;line-height:44px;font-size:31.5px;color:#bbbbbb;font-weight:bold;letter-spacing:-1.395px;">Build and run</div>
<div class="t" id="t46" style="left:2557px;top:426.70px;height:44px;line-height:44px;font-size:31.3px;color:#589df6;-webkit-text-stroke:0.3px;letter-spacing:0.148px;">Modify options</div>
<svg class="a" style="left:2797.8px;top:442.2px;" width="19" height="12" viewBox="0 0 19 12" preserveAspectRatio="none"><path d="M1.2,1.2 L9.5,9.6 L17.8,1.2" fill="none" stroke="#71808f" stroke-width="3"/></svg>
<div class="t" id="t47" style="left:2841px;top:425.50px;height:39px;line-height:39px;font-size:28px;color:#8c8c8c;-webkit-text-stroke:0.3px;letter-spacing:-0.420px;transform:scaleY(1.5);-webkit-text-stroke:0;">⌥</div>
<div class="t" id="t48" style="left:2874px;top:426.70px;height:44px;line-height:44px;font-size:31.3px;color:#8c8c8c;-webkit-text-stroke:0.3px;letter-spacing:-0.469px;">M</div>
<div class="a" style="left:1535.5px;top:503px;width:492.5px;height:62px;background:#3c3f41;border:2px solid #646464;border-radius:7px;"></div>
<div class="t" id="t49" style="left:1548.5px;top:512.20px;height:45px;line-height:45px;font-size:32px;color:#bbbbbb;font-family:'DejaVu Sans Mono', 'Liberation Mono', monospace;-webkit-text-stroke:0.5px;">java 8 <span style="color:#787878">SDK of 'yuzi-ge</span></div>
<svg class="a" style="left:1989px;top:529px;" width="22" height="12" viewBox="0 0 22 12" preserveAspectRatio="none"><path d="M0,0 H22 L11,12 Z" fill="#9a9da0"/></svg>
<div class="a" style="left:2043px;top:503px;width:860px;height:62px;background:#45494a;border:2px solid #646464;"></div>
<div class="t" id="t50" style="left:2056.5px;top:512.50px;height:47px;line-height:47px;font-size:33.25px;color:#a9b7c6;font-family:'DejaVu Sans Mono', 'Liberation Mono', monospace;-webkit-text-stroke:0.5px;">com.yupi.cli.example.ASCIIArt</div>
<svg class="a" style="left:2857.5px;top:514px;" width="27.5" height="35" viewBox="0 0 27.5 35" preserveAspectRatio="none"><rect x="2.2" y="2.2" width="23.1" height="30.6" fill="none" stroke="#5e6569" stroke-width="4.4"/><rect x="7.7" y="10" width="12" height="2.3" fill="#5e6569"/><rect x="7.7" y="16.2" width="12" height="2.3" fill="#5e6569"/><rect x="7.7" y="22.4" width="12" height="2.3" fill="#5e6569"/></svg>
<div class="a" style="left:1535px;top:595px;width:1369.5px;height:62px;background:#45494a;border:2px solid #646464;"></div>
<div class="t" id="t51" style="left:1551.2px;top:604.20px;height:45px;line-height:45px;font-size:32px;color:#bbbbbb;font-family:'DejaVu Sans Mono', 'Liberation Mono', monospace;-webkit-text-stroke:0.5px;">-s 12 yupi good</div>
<svg class="a" style="left:2803.2px;top:608.2px;" width="27.5" height="35" viewBox="0 0 27.5 35" preserveAspectRatio="none"><rect x="2.2" y="2.2" width="23.1" height="30.6" fill="none" stroke="#5e6569" stroke-width="4.4"/><rect x="7.7" y="10" width="12" height="2.3" fill="#5e6569"/><rect x="7.7" y="16.2" width="12" height="2.3" fill="#5e6569"/><rect x="7.7" y="22.4" width="12" height="2.3" fill="#5e6569"/></svg>
<svg class="a" style="left:2852.7px;top:610.3px;" width="31" height="31.5" viewBox="0 0 31 31.5" preserveAspectRatio="none"><path d="M17.5,0.8 L31,0 L30,13.5 Z M13.5,30.7 L0,31.5 L1,18 Z" fill="#5e6569"/><path d="M26,5 L18.5,12.5 M5,26.5 L12.5,19" stroke="#5e6569" stroke-width="3.2" fill="none"/></svg>
<div class="a" style="left:1519.8px;top:595.9px;width:590.7px;height:69.3px;border:6.2px solid #e8412a;border-radius:11.5px;"></div>
<div class="t" id="t52" style="left:2163px;top:601.80px;height:70px;line-height:70px;font-size:47.6px;color:#e8412a;font-family:'Liberation Sans', 'Noto Sans CJK SC', sans-serif;letter-spacing:0.565px;height:54.7px;overflow:hidden;">2、自定义输入</div>
<div class="t" id="t53" style="left:1529px;top:679.50px;height:37px;line-height:37px;font-size:26.2px;color:#8c8c8c;-webkit-text-stroke:0.3px;letter-spacing:-0.013px;">Press ⌥ for field hints</div>
<div class="t" id="t54" style="left:1527px;top:766.70px;height:44px;line-height:44px;font-size:31.3px;color:#bbbbbb;-webkit-text-stroke:0.3px;letter-spacing:0.118px;">Working directory:</div>
<div class="a" style="left:1909px;top:757px;width:996px;height:62px;background:#45494a;border:2px solid #646464;"></div>
<div class="t" id="t55" style="left:1926.5px;top:766.70px;height:44px;line-height:44px;font-size:31.3px;color:#bbbbbb;-webkit-text-stroke:0.3px;letter-spacing:0.797px;width:858px;overflow:hidden;">/Users/yupi/Code/yuzi-generator/yuzi-generator-basi</div>
<svg class="a" style="left:2798.4px;top:775.3px;" width="37.5" height="28" viewBox="0 0 38 30" preserveAspectRatio="none"><path d="M0,0 H11 L14,4 H28 V9 H9 L2,27 H0 Z" fill="#626a6e"/><path d="M10.5,11.5 H38 L30,30 H3 Z" fill="#626a6e"/></svg>
<svg class="a" style="left:2855px;top:770px;" width="27.5" height="35" viewBox="0 0 27.5 35" preserveAspectRatio="none"><rect x="2.2" y="2.2" width="23.1" height="30.6" fill="none" stroke="#5e6569" stroke-width="4.4"/><rect x="7.7" y="10" width="12" height="2.3" fill="#5e6569"/><rect x="7.7" y="16.2" width="12" height="2.3" fill="#5e6569"/><rect x="7.7" y="22.4" width="12" height="2.3" fill="#5e6569"/></svg>
<div class="t" id="t56" style="left:1527px;top:857.70px;height:44px;line-height:44px;font-size:31.3px;color:#bbbbbb;-webkit-text-stroke:0.3px;letter-spacing:-0.405px;">Environment variables:</div>
<div class="a" style="left:1909px;top:849px;width:996px;height:62px;background:#45494a;border:2px solid #646464;"></div>
<svg class="a" style="left:2855px;top:862px;" width="27.5" height="35" viewBox="0 0 27.5 35" preserveAspectRatio="none"><rect x="2.2" y="2.2" width="23.1" height="30.6" fill="none" stroke="#5e6569" stroke-width="4.4"/><rect x="7.7" y="10" width="12" height="2.3" fill="#5e6569"/><rect x="7.7" y="16.2" width="12" height="2.3" fill="#5e6569"/><rect x="7.7" y="22.4" width="12" height="2.3" fill="#5e6569"/></svg>
<div class="t" id="t57" style="left:1912px;top:936.50px;height:37px;line-height:37px;font-size:26.2px;color:#8c8c8c;-webkit-text-stroke:0.3px;letter-spacing:-0.255px;">Separate variables with semicolon: VAR=value; VAR1=value1</div>
<div class="a" style="left:1536.5px;top:1017px;width:768.5px;height:62px;background:#4c5052;border-radius:31px;box-shadow:0 3px 4px rgba(0,0,0,.25);"></div>
<div class="t" id="t58" style="left:1562px;top:1027.30px;height:44px;line-height:44px;font-size:31.3px;color:#bbbbbb;-webkit-text-stroke:0.3px;letter-spacing:0.034px;">Open run/debug tool window when started</div>
<svg class="a" style="left:2258px;top:1040px;" width="20" height="20" viewBox="0 0 20 20" preserveAspectRatio="none"><path d="M1.5,1.5 L18.5,18.5 M18.5,1.5 L1.5,18.5" stroke="#747c81" stroke-width="2" fill="none"/></svg>
<div class="t" id="t59" style="left:1528px;top:1180.70px;height:44px;line-height:44px;font-size:31.3px;color:#bbbbbb;-webkit-text-stroke:0.3px;letter-spacing:-0.463px;">Code Coverage</div>
<div class="a" style="left:1778px;top:1202px;width:974px;height:2px;background:#525557;"></div>
<div class="t" id="t60" style="left:2767px;top:1176.70px;height:44px;line-height:44px;font-size:31.3px;color:#589df6;-webkit-text-stroke:0.3px;letter-spacing:0.216px;">Modify</div>
<svg class="a" style="left:2881.8px;top:1191.7px;" width="19.5" height="12" viewBox="0 0 19 12" preserveAspectRatio="none"><path d="M1.2,1.2 L9.5,9.6 L17.8,1.2" fill="none" stroke="#71808f" stroke-width="3"/></svg>
<div class="t" id="t61" style="left:1578px;top:1260.20px;height:44px;line-height:44px;font-size:31.3px;color:#bbbbbb;-webkit-text-stroke:0.3px;letter-spacing:-0.332px;">Packages and classes to include in coverage data</div>
<div class="a" style="left:2350px;top:1282px;width:562px;height:2px;background:#525557;"></div>
<div class="a" style="left:1578px;top:1328px;width:1333.5px;height:49px;border:2px solid #303234;border-bottom:none;"></div>
<svg class="a" style="left:1600px;top:1347px;" width="27" height="27" viewBox="0 0 27 27" preserveAspectRatio="none"><path d="M0,13.5 H27" stroke="#5e6163" stroke-width="4.5" fill="none"/></svg>
<svg class="a" style="left:1668px;top:1347px;" width="34" height="30" viewBox="0 0 34 30" preserveAspectRatio="none"><path d="M13.5,0 V27 M0,13.5 H27" stroke="#c6c6c6" stroke-width="4.5" fill="none"/><path d="M20,24.5 H34 L27,31 Z" fill="#c6c6c6"/></svg>
<div class="a" style="left:871.5px;top:1376px;width:2062px;height:2px;background:#2f3133;"></div>
</body></html>
